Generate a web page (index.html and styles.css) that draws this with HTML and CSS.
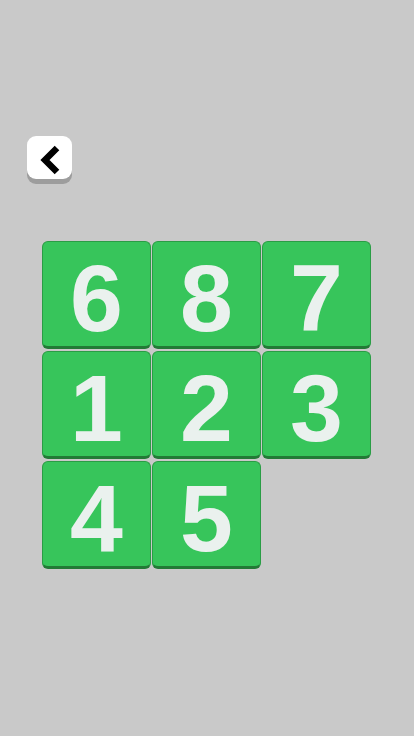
FILE: index.html
```html
<!DOCTYPE html>
<html>
<head>
<meta charset="utf-8">
<link rel="stylesheet" href="styles.css">
</head>
<body>
<div class="screen">
  <button class="back" aria-label="Back">
    <svg width="22" height="30" viewBox="0 0 22 30"><path d="M18 3 L6 15 L18 27" fill="none" stroke="#000" stroke-width="6.5" stroke-linejoin="miter"/></svg>
  </button>
  <div class="board">
    <div class="tile">6</div>
    <div class="tile">8</div>
    <div class="tile">7</div>
    <div class="tile">1</div>
    <div class="tile">2</div>
    <div class="tile">3</div>
    <div class="tile">4</div>
    <div class="tile">5</div>
  </div>
</div>
</body>
</html>
```

FILE: styles.css
```css
html, body {
  margin: 0;
  padding: 0;
  background: #c9c9c9;
}
.screen {
  width: 414px;
  height: 736px;
  display: flex;
  flex-direction: column;
  align-items: flex-start;
}
.back {
  margin: 136px 0 0 27px;
  width: 45px;
  height: 43px;
  border: none;
  padding: 0;
  border-radius: 9px;
  background: #ffffff;
  box-shadow: 0 5px 0 #9d9d9d;
  display: flex;
  align-items: center;
  justify-content: center;
}
.back svg {
  display: block;
  margin: 4px 0 0 1px;
}
.board {
  margin: 62px 0 0 42px;
  display: grid;
  grid-template-columns: repeat(3, 109px);
  grid-auto-rows: 108px;
  column-gap: 1px;
  row-gap: 2px;
}
.tile {
  box-sizing: border-box;
  background: #37c55b;
  border: 1px solid #2a9d45;
  border-bottom: 3px solid #227a36;
  border-radius: 6px;
  display: flex;
  align-items: center;
  justify-content: center;
  font-family: "Liberation Sans", Arial, sans-serif;
  font-weight: 700;
  font-size: 95px;
  line-height: 1;
  color: #eaf1ee;
  padding-top: 8px;
}
```
